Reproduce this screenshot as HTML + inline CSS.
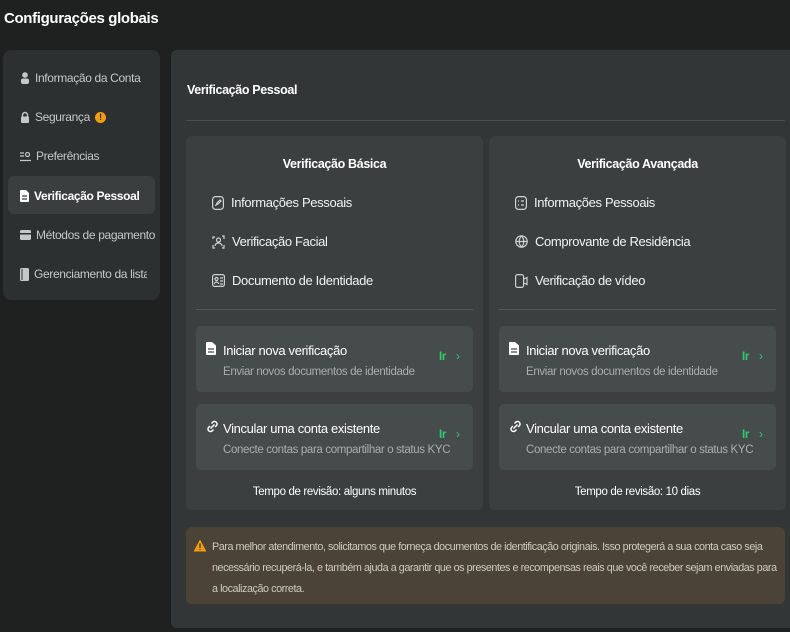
<!DOCTYPE html>
<html><head><meta charset="utf-8"><style>
*{margin:0;padding:0;box-sizing:border-box}
body{width:790px;height:632px;background:#1f2020;font-family:"Liberation Sans",sans-serif;color:#e6e8e8;position:relative;overflow:hidden;letter-spacing:-0.35px}
.abs{position:absolute}
svg{flex-shrink:0}
.title{left:4px;top:10px;font-size:15px;font-weight:bold;color:#fff}
.side{left:3px;top:50px;width:157px;height:250px;background:#2d3030;border-radius:8px}
.si{position:absolute;left:17px;font-size:12px;color:#c4c8c8;display:flex;align-items:center;gap:5px;white-space:nowrap}
.sel{position:absolute;left:5px;top:126px;width:147px;height:38px;background:#3a3e3e;border-radius:6px}
.main{left:171px;top:50px;width:625px;height:578px;background:#323636;border-radius:6px}
.card{top:136px;width:297px;height:374px;background:#3b3f3f;border-radius:6px}
.ct{font-size:12.5px;font-weight:bold;color:#fff;text-align:center;position:absolute;top:21px;width:100%}
.li{position:absolute;left:26px;font-size:13px;color:#f2f4f4;display:flex;align-items:center;gap:7px}
.hr{position:absolute;left:10px;right:10px;top:173px;height:1px;background:#555a5a}
.it{position:absolute;left:10px;width:277px;height:66px;background:#464b4b;border-radius:5px}
.it b{position:absolute;left:27px;top:17px;font-size:13px;font-weight:normal;color:#fff}
.it i{position:absolute;left:27px;top:39px;font-size:11.5px;font-style:normal;color:#a9aeae}
.it .go{position:absolute;left:243px;top:25px;font-size:11.5px;color:#2ecc71;font-weight:bold}
.it .ar{position:absolute;left:260px;top:23px;font-size:12px;color:#2ecc71}
.it svg{position:absolute;left:10px;top:16px}
.rt{position:absolute;top:350px;width:100%;text-align:center;font-size:11.5px;color:#fff}
.warn{left:186px;top:527px;width:599px;height:77px;background:#4a4336;border-radius:6px;font-size:10.8px;letter-spacing:-0.45px;line-height:21px;color:#cfcabe;padding:10px 8px 0 26px}
</style></head><body>
<div class="abs title">Configurações globais</div>
<div class="abs side">
 <div class="sel"></div>
 <div class="si" style="top:21px"><svg width="10" height="12"><circle cx="5" cy="3" r="2.8" fill="#c4c8c8"/><rect x="1" y="6.5" width="8" height="5.5" rx="2" fill="#c4c8c8"/></svg>Informação da Conta</div>
 <div class="si" style="top:60px"><svg width="10" height="12"><path d="M2.5 6V4a2.5 2.5 0 015 0v2" stroke="#c4c8c8" fill="none" stroke-width="1.4"/><rect x="1" y="5.5" width="8" height="6.5" rx="1" fill="#c4c8c8"/></svg>Segurança <span style="display:inline-block;width:11px;height:11px;border-radius:50%;background:#f39c12;color:#2d3030;font-size:9px;font-weight:bold;text-align:center;line-height:11px">!</span></div>
 <div class="si" style="top:99px"><svg width="11" height="11"><path d="M0 2h4M0 5h4M0 9.5h11" stroke="#c4c8c8" stroke-width="1.3"/><circle cx="7.5" cy="3.5" r="2" stroke="#c4c8c8" fill="none" stroke-width="1.2"/></svg>Preferências</div>
 <div class="si" style="top:139px;color:#fff;font-weight:bold"><svg width="9" height="12"><path d="M0 1a1 1 0 011-1h5l3 3v8a1 1 0 01-1 1H1a1 1 0 01-1-1z" fill="#fff"/><path d="M2 6h5M2 9h5" stroke="#3a3e3e" stroke-width="1.2"/></svg>Verificação Pessoal</div>
 <div class="si" style="top:178px"><svg width="11" height="10"><rect y="0" width="11" height="10" rx="1.5" fill="#c4c8c8"/><rect y="3" width="11" height="1.5" fill="#2d3030"/></svg>Métodos de pagamento</div>
 <div class="si" style="top:217px;width:127px;overflow:hidden"><svg width="9" height="13"><rect width="9" height="13" rx="1.5" fill="#c4c8c8"/><path d="M2 1v11" stroke="#2d3030"/></svg>Gerenciamento da lista de</div>
</div>
<div class="abs main"></div>
<div class="abs" style="left:187px;top:83px;font-size:12.5px;font-weight:bold;color:#fff">Verificação Pessoal</div>
<div class="abs" style="left:186px;top:120px;width:599px;height:1px;background:#4a4f4f"></div>

<div class="abs card" style="left:186px">
 <div class="ct">Verificação Básica</div>
 <div class="li" style="top:59px"><svg width="12" height="14" fill="none" stroke="#cfd3d3" stroke-width="1.2"><rect x="0.6" y="0.6" width="10.8" height="12.8" rx="3"/><path d="M4 9l1-2 3-3 1 1-3 3z"/></svg>Informações Pessoais</div>
 <div class="li" style="top:98px"><svg width="13" height="14" fill="none" stroke="#cfd3d3" stroke-width="1.2"><path d="M1 4V2h2M10 1h2v3M1 10v3h2M10 13h2v-3"/><circle cx="6.5" cy="5" r="2"/><path d="M3 11a3.5 3 0 017 0"/></svg>Verificação Facial</div>
 <div class="li" style="top:137px"><svg width="13" height="13" fill="none" stroke="#cfd3d3" stroke-width="1.2"><rect x="0.6" y="0.6" width="11.8" height="11.8" rx="2"/><circle cx="4.5" cy="5" r="1.5"/><path d="M2.5 10a2 2 0 014 0M8 4h3M8 7h3M8 10h3"/></svg>Documento de Identidade</div>
 <div class="hr"></div>
 <div class="it" style="top:190px"><svg width="10" height="13"><path d="M0 1a1 1 0 011-1h5l4 3.5V12a1 1 0 01-1 1H1a1 1 0 01-1-1z" fill="#fff"/><path d="M2 7h6M2 10h6" stroke="#464b4b" stroke-width="1.3"/></svg><b>Iniciar nova verificação</b><i style="top:40px">Enviar novos documentos de identidade</i><span class="go">Ir</span><span class="ar">›</span></div>
 <div class="it" style="top:268px"><svg width="13" height="13" fill="none" stroke="#fff" stroke-width="1.5"><path d="M5.5 3.5l1.5-1.5a2.5 2.5 0 013.5 3.5L9 7M7.5 9.5L6 11a2.5 2.5 0 01-3.5-3.5L4 6M4.5 8.5l4-4"/></svg><b>Vincular uma conta existente</b><i style="top:40px">Conecte contas para compartilhar o status KYC</i><span class="go">Ir</span><span class="ar">›</span></div>
 <div class="rt">Tempo de revisão: alguns minutos</div>
</div>

<div class="abs card" style="left:489px">
 <div class="ct">Verificação Avançada</div>
 <div class="li" style="top:59px"><svg width="12" height="14" fill="none" stroke="#cfd3d3" stroke-width="1.2"><rect x="0.6" y="0.6" width="10.8" height="12.8" rx="3"/><path d="M3 5h1M6 5h3M3 9h1M6 9h3"/></svg>Informações Pessoais</div>
 <div class="li" style="top:98px"><svg width="13" height="13" fill="none" stroke="#cfd3d3" stroke-width="1.2"><circle cx="6.5" cy="6.5" r="5.7"/><path d="M1 6.5h11M6.5 1c-3 3-3 8 0 11M6.5 1c3 3 3 8 0 11"/></svg>Comprovante de Residência</div>
 <div class="li" style="top:137px"><svg width="13" height="14" fill="none" stroke="#cfd3d3" stroke-width="1.2"><rect x="0.6" y="0.6" width="8" height="12.8" rx="2"/><path d="M9 5l3-1.5v7L9 9"/></svg>Verificação de vídeo</div>
 <div class="hr"></div>
 <div class="it" style="top:190px"><svg width="10" height="13"><path d="M0 1a1 1 0 011-1h5l4 3.5V12a1 1 0 01-1 1H1a1 1 0 01-1-1z" fill="#fff"/><path d="M2 7h6M2 10h6" stroke="#464b4b" stroke-width="1.3"/></svg><b>Iniciar nova verificação</b><i style="top:40px">Enviar novos documentos de identidade</i><span class="go">Ir</span><span class="ar">›</span></div>
 <div class="it" style="top:268px"><svg width="13" height="13" fill="none" stroke="#fff" stroke-width="1.5"><path d="M5.5 3.5l1.5-1.5a2.5 2.5 0 013.5 3.5L9 7M7.5 9.5L6 11a2.5 2.5 0 01-3.5-3.5L4 6M4.5 8.5l4-4"/></svg><b>Vincular uma conta existente</b><i style="top:40px">Conecte contas para compartilhar o status KYC</i><span class="go">Ir</span><span class="ar">›</span></div>
 <div class="rt">Tempo de revisão: 10 dias</div>
</div>

<div class="abs warn"><svg class="abs" style="left:7px;top:12px" width="14" height="13"><path d="M7 0.5L13.5 12.5H0.5z" fill="#f39c12"/><path d="M7 4.5v4.5M7 10.3v1" stroke="#4a4336" stroke-width="1.5"/></svg>Para melhor atendimento, solicitamos que forneça documentos de identificação originais. Isso protegerá a sua conta caso seja necessário recuperá-la, e também ajuda a garantir que os presentes e recompensas reais que você receber sejam enviadas para a localização correta.</div>
</body></html>
